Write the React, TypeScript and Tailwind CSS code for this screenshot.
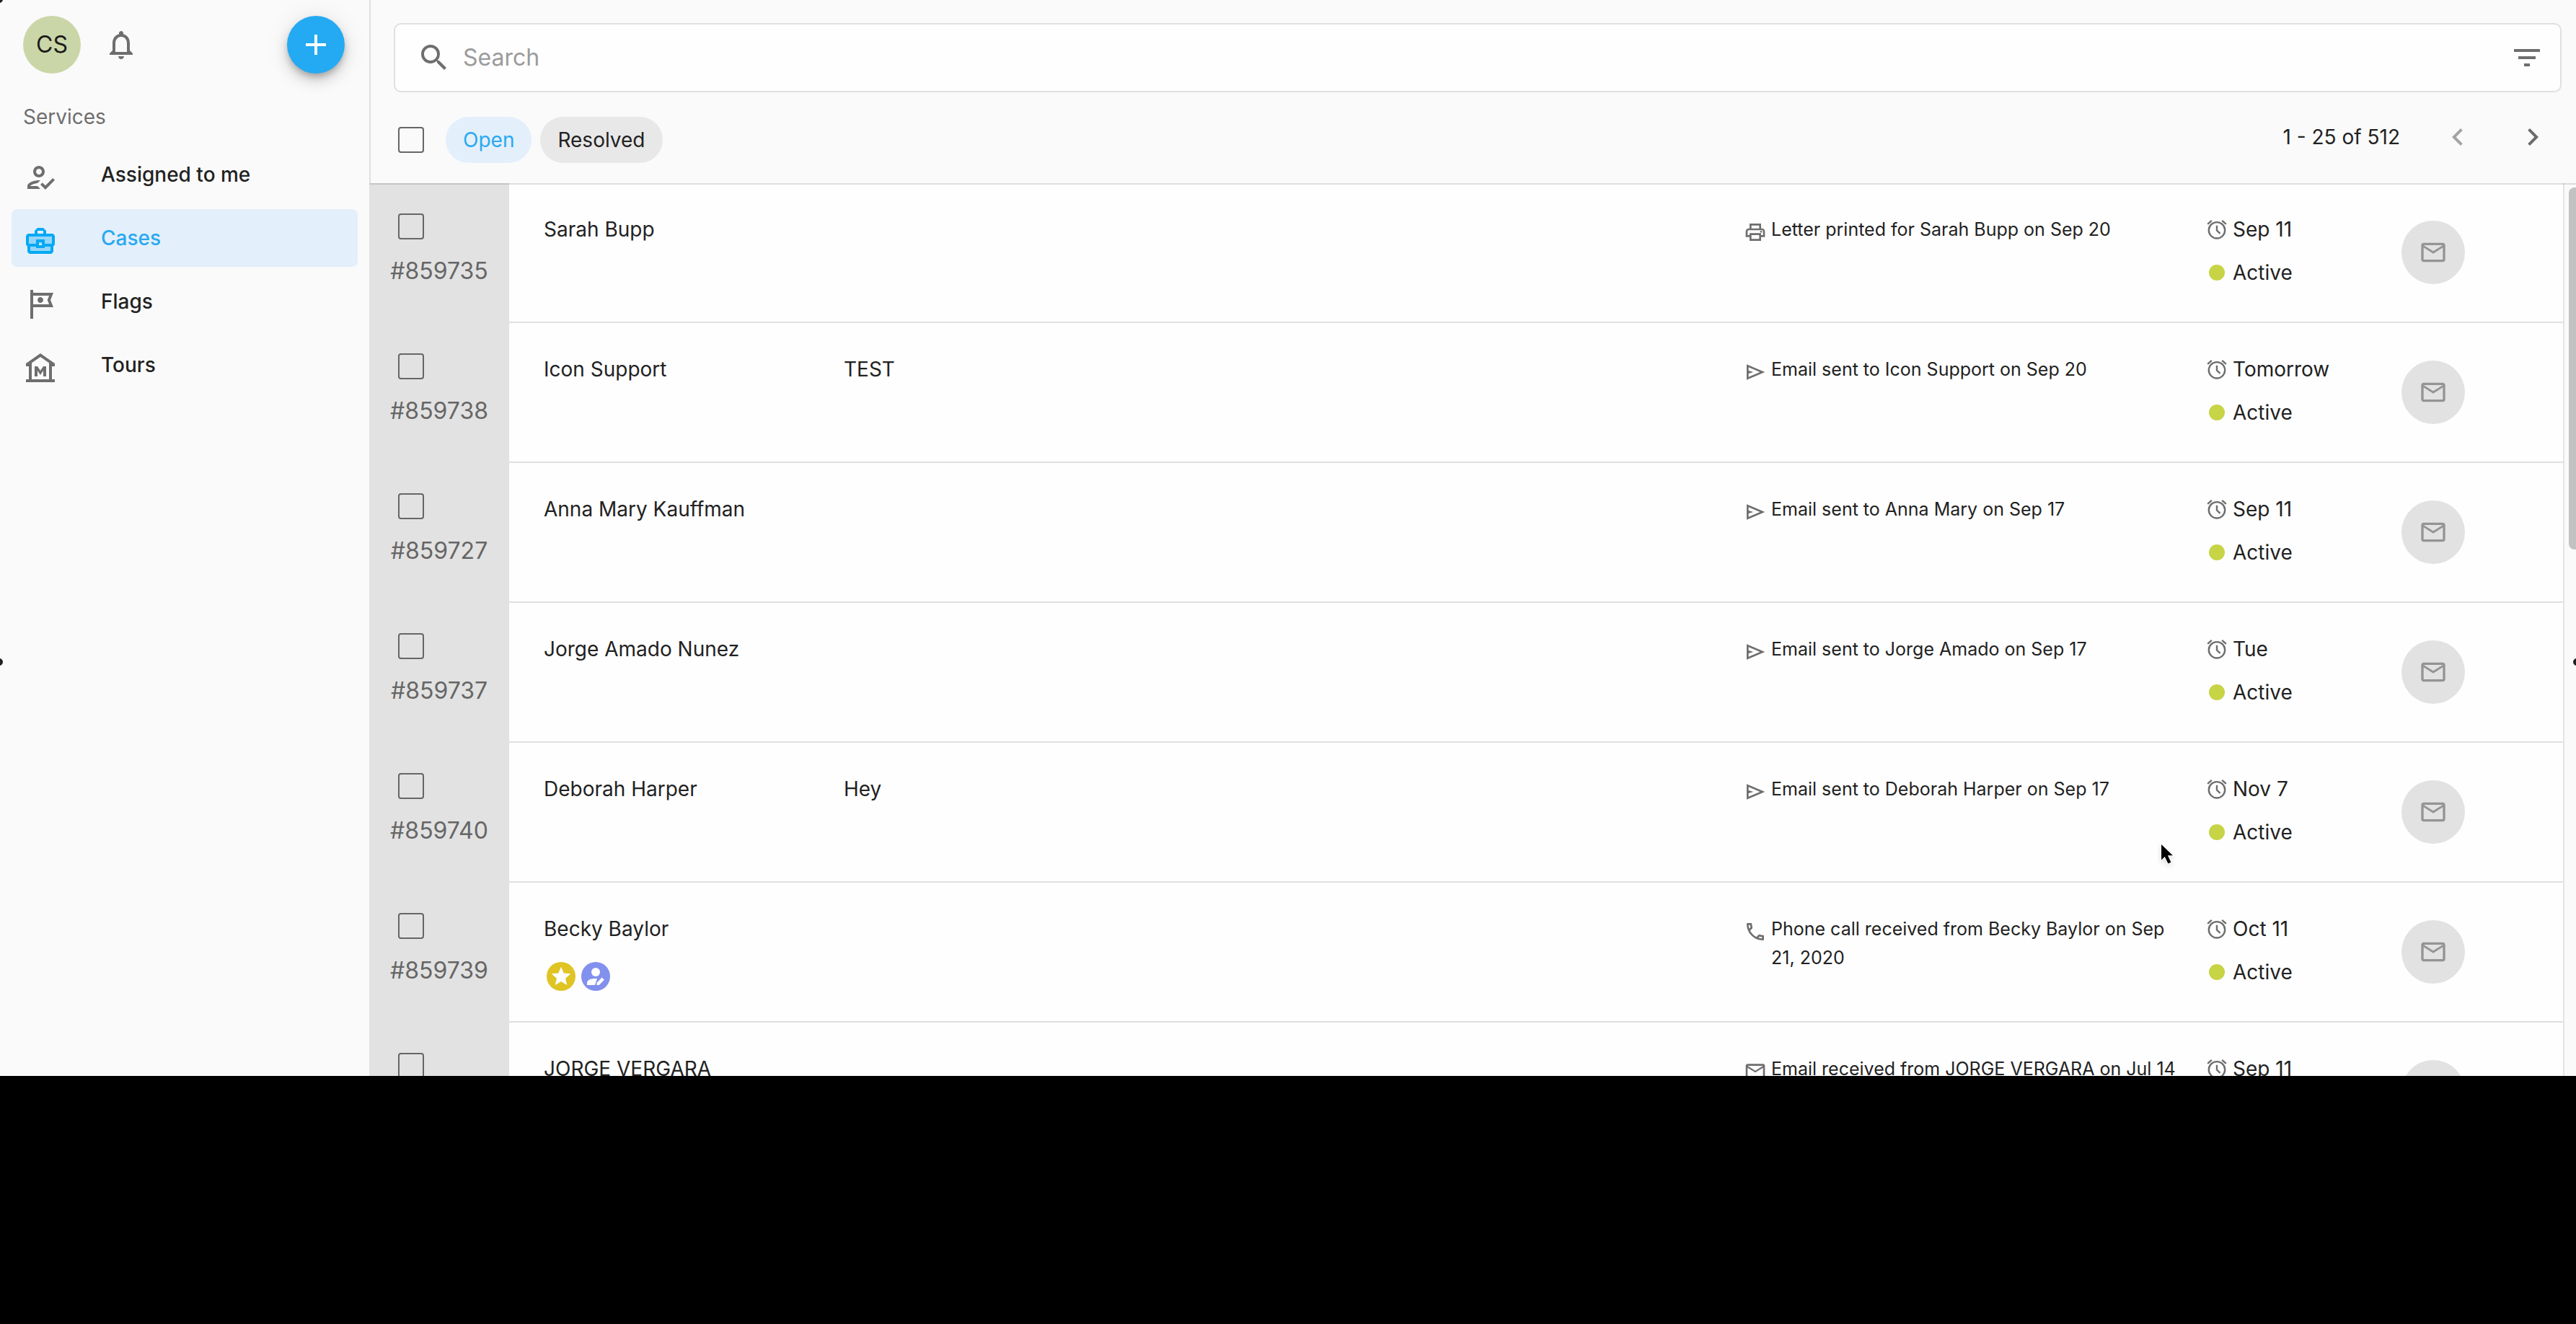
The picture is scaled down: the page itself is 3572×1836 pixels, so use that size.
import React from "react";
import {
  MdAdd,
  MdChevronLeft,
  MdChevronRight,
  MdFilterList,
  MdSearch,
  MdStar,
  MdOutlineHowToReg,
  MdOutlineTour,
  MdNotificationsNone,
  MdOutlineLocalPrintshop,
  MdOutlinePhone,
  MdOutlineMailOutline,
} from "react-icons/md";

type Kind = "print" | "send" | "phone" | "mail";

interface CaseRow {
  id?: string;
  name: string;
  subject?: string;
  kind: Kind;
  activity: string;
  due: string;
  status?: string;
  badges?: boolean;
}

const rows: CaseRow[] = [
  { id: "859735", name: "Sarah Bupp", kind: "print", activity: "Letter printed for Sarah Bupp on Sep 20", due: "Sep 11", status: "Active" },
  { id: "859738", name: "Icon Support", subject: "TEST", kind: "send", activity: "Email sent to Icon Support on Sep 20", due: "Tomorrow", status: "Active" },
  { id: "859727", name: "Anna Mary Kauffman", kind: "send", activity: "Email sent to Anna Mary on Sep 17", due: "Sep 11", status: "Active" },
  { id: "859737", name: "Jorge Amado Nunez", kind: "send", activity: "Email sent to Jorge Amado on Sep 17", due: "Tue", status: "Active" },
  { id: "859740", name: "Deborah Harper", subject: "Hey", kind: "send", activity: "Email sent to Deborah Harper on Sep 17", due: "Nov 7", status: "Active" },
  { id: "859739", name: "Becky Baylor", kind: "phone", activity: "Phone call received from Becky Baylor on Sep 21, 2020", due: "Oct 11", status: "Active", badges: true },
  { name: "JORGE VERGARA", kind: "mail", activity: "Email received from JORGE VERGARA on Jul 14", due: "Sep 11" },
];

function CasesIcon({ className }: { className?: string }) {
  return (
    <svg viewBox="0 0 24 24" className={className} fill="currentColor">
      <path opacity=".35" d="M4 9h16v5H4zM5 16h14v3H5z" />
      <path
        fillRule="evenodd"
        d="M10 3h4l2 2v2h4c1.100 0 2 .9 2 2v5c0 .75-.4 1.380-1 1.730V19c0 1.100-.9 2-2 2H5c-1.100 0-2-.9-2-2v-3.280c-.59-.35-1-.99-1-1.720V9c0-1.100.9-2 2-2h4V5zM10 5v2h4V5zM4 9v5h5v-3h6v3h5V9zM5 16v3h14v-3h-4v1H9v-1zM11 13v2h2v-2z"
      />
    </svg>
  );
}

function MuseumIcon({ className }: { className?: string }) {
  return (
    <svg viewBox="0 0 24 24" className={className} fill="currentColor">
      <path
        fillRule="evenodd"
        d="M22 11V9L12 2 2 9v2h2v9H2v2h20v-2h-2v-9zM18 20H6V8.640l6-4.200 6 4.200z"
      />
      <path d="M16 11h-2l-2 3-2-3H8v7h2v-4l2 3 2-3v4h2z" />
    </svg>
  );
}

const navItems = [
  { label: "Assigned to me", Icon: MdOutlineHowToReg, active: false },
  { label: "Cases", Icon: CasesIcon, active: true },
  { label: "Flags", Icon: MdOutlineTour, active: false },
  { label: "Tours", Icon: MuseumIcon, active: false },
];

function SendIcon() {
  return (
    <svg viewBox="0 0 24 24" className="size-8" fill="currentColor">
      <path fillRule="evenodd" d="M3 20V4l19 8zM5 17l11.850-5L5 7v3.500l5 1.500-5 1.500z" />
    </svg>
  );
}

function ActivityIcon({ kind }: { kind: Kind }) {
  if (kind === "print") return <MdOutlineLocalPrintshop className="size-8" />;
  if (kind === "phone") return <MdOutlinePhone className="size-8" />;
  if (kind === "mail") return <MdOutlineMailOutline className="size-8" />;
  return <SendIcon />;
}

function AlarmIcon() {
  return (
    <svg viewBox="0 0 24 24" className="size-8 shrink-0 text-[#6e6e6e]" fill="none" stroke="currentColor" strokeWidth="1.8">
      <circle cx="12" cy="13" r="8.4" />
      <path d="M12 8v5.2l3.4 3.2M2.4 6.6 6.6 2.9M21.6 6.6 17.4 2.9" />
    </svg>
  );
}

function Checkbox({ label }: { label: string }) {
  return (
    <input
      type="checkbox"
      aria-label={label}
      className="block size-9 shrink-0 appearance-none rounded-[4px] border-2 border-[#666]"
    />
  );
}

function Sidebar() {
  return (
    <aside className="w-[512px] shrink-0 bg-[#fafafa]">
      <div className="flex items-center px-8 pt-[22px]">
        <div className="flex size-20 items-center justify-center rounded-full bg-[#cbd6a8] text-[32px] text-[#1c1c1c]">
          CS
        </div>
        <button aria-label="Notifications" className="ml-8 text-[#6e6e6e]">
          <MdNotificationsNone className="size-12" />
        </button>
        <button
          aria-label="New case"
          className="mr-[2px] ml-auto flex size-20 items-center justify-center rounded-full bg-[#24aaf2] text-white shadow-[0_6px_10px_-2px_rgba(0,0,0,0.25),0_10px_20px_rgba(0,0,0,0.14),0_2px_36px_rgba(0,0,0,0.08)]"
        >
          <MdAdd className="size-12" />
        </button>
      </div>
      <h2 className="mt-10 px-8 text-[28px] leading-10 text-[#6e6e6e]">Services</h2>
      <nav className="mt-5 flex flex-col gap-2 px-4">
        {navItems.map(({ label, Icon, active }) => (
          <a
            key={label}
            href="#"
            aria-current={active ? "page" : undefined}
            className={
              active
                ? "flex h-20 items-center gap-[60px] rounded-lg bg-[#e3effb] px-4 text-[28px] font-medium text-[#29a9f1]"
                : "flex h-20 items-center gap-[60px] rounded-lg px-4 text-[28px] font-medium text-[#222]"
            }
          >
            <Icon className={active ? "mt-2 size-12 text-[#03a9f4]" : "mt-2 size-12 text-[#6e6e6e]"} />
            {label}
          </a>
        ))}
      </nav>
    </aside>
  );
}

function Toolbar() {
  return (
    <header className="relative z-10 h-[254px] shrink-0 border-l-2 border-[#e0e0e0] bg-[#fafafa] shadow-[0_2px_0_rgba(0,0,0,0.12)]">
      <div className="px-5 pt-8 pl-8">
        <label className="flex h-24 items-center rounded-[10px] border-2 border-[#e0e0e0] bg-[#fefefe] pr-[22px] pl-[30px]">
          <MdSearch className="size-12 shrink-0 text-[#6e6e6e]" />
          <input
            type="search"
            aria-label="Search"
            placeholder="Search"
            className="ml-4 min-w-0 flex-1 bg-transparent text-[32px] outline-none placeholder:text-[#9b9b9b]"
          />
          <button aria-label="Filter" className="text-[#6e6e6e]">
            <MdFilterList className="size-12" />
          </button>
        </label>
      </div>
      <div className="mt-[34px] flex items-center pr-9 pl-[38px] text-[28px]">
        <Checkbox label="Select all" />
        <div className="ml-[30px] flex gap-3">
          <button className="h-16 rounded-full bg-[#e3effb] px-6 text-[#29a9f1]">Open</button>
          <button className="h-16 rounded-full bg-[#e8e8e8] px-6 text-[#222]">Resolved</button>
        </div>
        <div className="mb-2 ml-auto flex items-center text-[#222]">
          <span>1 - 25 of 512</span>
          <button aria-label="Previous page" disabled className="ml-14 text-[#a3a3a3]">
            <MdChevronLeft className="size-12" />
          </button>
          <button aria-label="Next page" className="ml-14 text-[#6b6b6b]">
            <MdChevronRight className="size-12" />
          </button>
        </div>
      </div>
    </header>
  );
}

function Badges() {
  return (
    <div className="mt-[26px] flex gap-2 pl-1">
      <span className="flex size-10 items-center justify-center rounded-full bg-[#dfc424] text-white">
        <MdStar className="size-8" />
      </span>
      <span className="flex size-10 items-center justify-center rounded-full bg-[#8290ee] text-white">
        <svg viewBox="0 0 40 40" className="size-10" fill="currentColor">
          <circle cx="20" cy="14" r="6" />
          <path d="M8 32v-3c0-4.500 6-6.500 14-6l-3 9z" />
          <path d="M21.500 32v-3.200l7.200-7.300 3.200 3.200-7.200 7.300z" />
        </svg>
      </span>
    </div>
  );
}

function CaseTable() {
  return (
    <table className="w-full table-fixed border-separate border-spacing-0 text-left text-[28px] leading-10 text-[#222]">
      <colgroup>
        <col className="w-[194px]" />
        <col className="w-[464px]" />
        <col />
        <col className="w-[640px]" />
        <col className="w-[272px]" />
        <col className="w-[224px]" />
      </colgroup>
      <tbody>
        {rows.map((r) => (
          <tr key={r.name} className="h-[194px] align-top">
            <td className="bg-[#e2e2e2] pt-[42px]">
              <div className="pl-10">
                <Checkbox label={`Select case for ${r.name}`} />
              </div>
              {r.id && <div className="mt-6 text-center text-[32px] text-[#666]">#{r.id}</div>}
            </td>
            <td className="border-b-2 border-[#e0e0e0] pt-11 pl-12 whitespace-nowrap">
              {r.name}
              {r.badges && <Badges />}
            </td>
            <td className="border-b-2 border-[#e0e0e0] pt-11">{r.subject}</td>
            <td className="border-b-2 border-[#e0e0e0] pt-11 pr-8">
              <div className="flex gap-1.5 text-[25px] leading-10">
                <span className="mt-2 shrink-0 text-[#6e6e6e]">
                  <ActivityIcon kind={r.kind} />
                </span>
                <span>{r.activity}</span>
              </div>
            </td>
            <td className="border-b-2 border-[#e0e0e0] pt-11">
              <div className="flex items-center gap-1.5">
                <AlarmIcon />
                {r.due}
              </div>
              {r.status && (
                <div className="mt-5 flex items-center gap-1.5">
                  <span className="flex w-8 justify-center">
                    <span className="size-[22px] rounded-full bg-[#c6d445]" />
                  </span>
                  {r.status}
                </div>
              )}
            </td>
            <td className="border-b-2 border-[#e0e0e0] pt-[52px]">
              <button
                aria-label={`Email ${r.name}`}
                className="flex size-[88px] items-center justify-center rounded-full bg-[#e2e2e2] text-[#949494]"
              >
                <MdOutlineMailOutline className="size-10" />
              </button>
            </td>
          </tr>
        ))}
      </tbody>
    </table>
  );
}

function Pointer() {
  return (
    <svg viewBox="0 0 20 32" className="absolute top-[1168px] left-[2994px] h-8 w-5 drop-shadow-md">
      <path
        d="M3 3v21.500l4.800-4.600 4.600 9.600 4-1.800-4.500-9.400h7z"
        fill="#000"
        stroke="#fff"
        strokeWidth="2"
        paintOrder="stroke"
      />
    </svg>
  );
}

function Handles() {
  return (
    <>
      <span className="absolute -top-1.5 -left-1.5 size-2.5 rounded-full bg-[#222]" />
      <span className="absolute -top-1.5 left-1/2 size-2.5 -translate-x-1/2 rounded-full bg-[#222]" />
      <span className="absolute -top-1.5 -right-1.5 size-2.5 rounded-full bg-[#222]" />
      <span className="absolute top-1/2 -left-1.5 size-2.5 -translate-y-1/2 rounded-full bg-[#222]" />
      <span className="absolute top-1/2 -right-1.5 size-2.5 -translate-y-1/2 rounded-full bg-[#222]" />
    </>
  );
}

export default function App() {
  return (
    <div className="relative flex h-screen flex-col overflow-hidden bg-white font-['Inter',sans-serif]">
      <div className="flex min-h-0 flex-1">
        <Sidebar />
        <main className="flex min-w-0 flex-1 flex-col">
          <Toolbar />
          <div className="flex min-h-0 flex-1 overflow-hidden bg-[#fefefe]">
            <div className="min-w-0 flex-1">
              <CaseTable />
            </div>
            <div className="w-[18px] border-l-2 border-[#e4e4e4] bg-[#fafafa] pt-1.5 pl-1.5">
              <div className="h-[502px] rounded-l-lg bg-[#c2c2c2]" />
            </div>
          </div>
        </main>
      </div>
      <footer className="h-[344px] shrink-0 bg-black" />
      <Pointer />
      <Handles />
    </div>
  );
}
